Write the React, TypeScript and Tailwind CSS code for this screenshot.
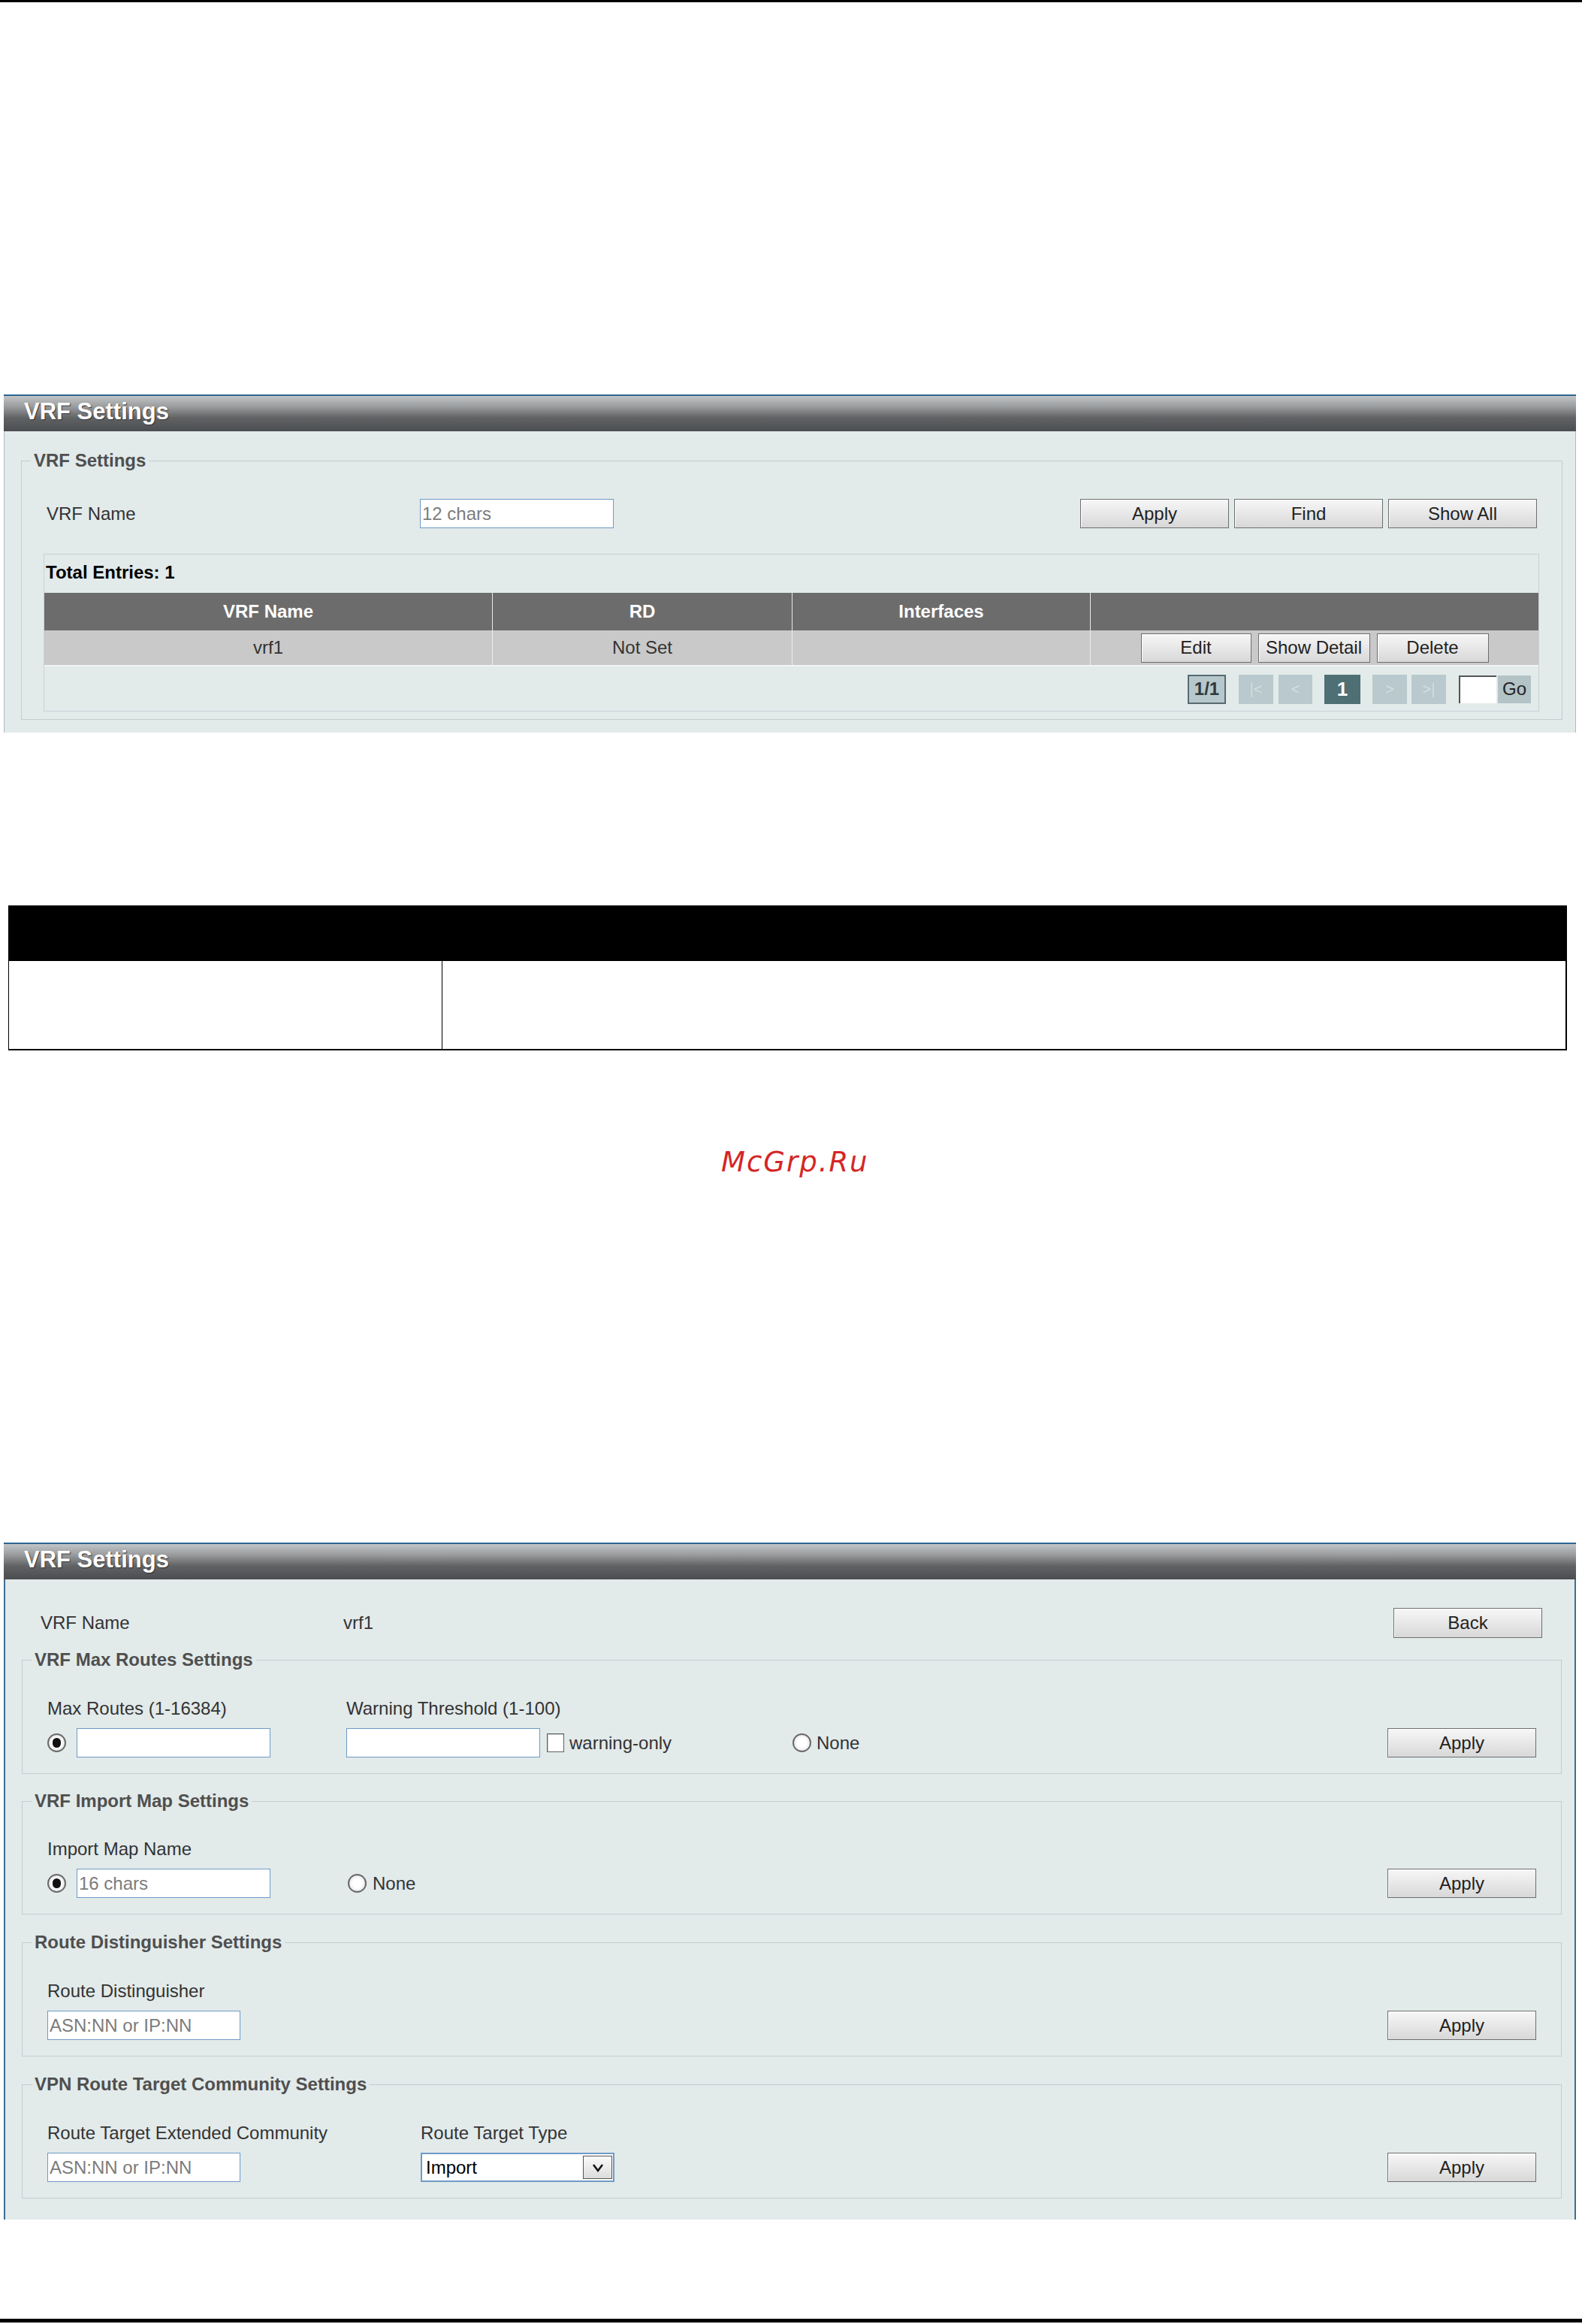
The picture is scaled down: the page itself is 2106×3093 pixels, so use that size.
import React from "react";

function Btn({ children, className }: { children?: React.ReactNode; className: string }) {
  return (
    <div
      className={
        "flex items-center justify-center border border-[#6e6e6e] bg-[linear-gradient(to_bottom,#f7f7f7,#d8d8d8)] text-[#222] text-[24px] leading-none shadow-[inset_1px_1px_0_#ffffff] " +
        className
      }
    >
      {children}
    </div>
  );
}

function TextInput({ placeholder, className }: { placeholder?: string; className: string }) {
  return (
    <div
      className={
        "h-[39px] bg-white border border-[#6f9bc6] flex items-center pl-[2px] text-[#7c7c7c] text-[24px] leading-none " +
        className
      }
    >
      {placeholder}
    </div>
  );
}

function Radio({ checked }: { checked?: boolean }) {
  return (
    <div className="w-[25px] h-[25px] rounded-full border-[2px] border-[#6a6a6a] bg-[radial-gradient(circle,#ffffff_40%,#d8d8d8_100%)] flex items-center justify-center shrink-0">
      {checked ? <div className="w-[11px] h-[13px] rounded-full bg-[#111]" /> : null}
    </div>
  );
}

function Checkbox() {
  return <div className="w-[23px] h-[25px] border border-[#606060] bg-white shadow-[inset_1px_1px_0_#c8c8c8] shrink-0" />;
}

function PanelHeader() {
  return (
    <div className="h-[49px] border-t-2 border-[#2c6592] bg-[linear-gradient(to_bottom,#c2c5c7_0%,#9a9c9e_30%,#606264_62%,#4b4d50_100%)] flex items-center pl-[27px] pb-[7px]">
      <span className="text-white font-bold text-[31px] leading-none [text-shadow:1px_1px_1px_#333]">VRF Settings</span>
    </div>
  );
}

function Fieldset({ legend, className, children }: { legend: string; className: string; children: React.ReactNode }) {
  return (
    <fieldset className={"border border-[#c3cdd0] ml-[22px] mr-[17px] " + className}>
      <legend className="ml-[12px] px-[4px] font-bold text-[#4f4f4f] text-[24px] leading-[28px]">{legend}</legend>
      {children}
    </fieldset>
  );
}

function PageBox({ children, className }: { children?: React.ReactNode; className: string }) {
  return <div className={"flex items-center justify-center leading-none " + className}>{children}</div>;
}

export default function App() {
  return (
    <div className="flex flex-col w-[2106px] min-h-[3093px] bg-white font-['Liberation_Sans',Arial,sans-serif] text-[24px] text-[#333]">
      <div className="h-[3px] bg-black" />

      {/* Panel 1 */}
      <div className="mt-[522px] ml-[5px] w-[2093px] h-[450px] flex flex-col">
        <PanelHeader />
        <div className="flex-1 bg-[#e2eaea] border-x border-[#a9bccb] pt-[25px] flex flex-col">
          <Fieldset legend="VRF Settings" className="pb-[10px]">
            <div className="flex items-center pt-[37px] pl-[33px] pr-[33px]">
              <div className="w-[497px] leading-[28px]">VRF Name</div>
              <TextInput placeholder="12 chars" className="w-[258px]" />
              <div className="ml-auto flex gap-[7px]">
                <Btn className="w-[198px] h-[39px]">Apply</Btn>
                <Btn className="w-[198px] h-[39px]">Find</Btn>
                <Btn className="w-[198px] h-[39px]">Show All</Btn>
              </div>
            </div>

            <div className="mt-[34px] ml-[29px] mr-[30px] border border-[#c9d3d5] flex flex-col">
              <div className="pt-[10px] pl-[2px] font-bold text-black leading-[28px]">Total Entries: 1</div>
              <div className="mt-[13px] grid grid-cols-[597px_399px_397px_1fr] h-[50px] bg-[#6c6c6c] text-white font-bold">
                <div className="flex items-center justify-center border-r border-[#e8e8e8]">VRF Name</div>
                <div className="flex items-center justify-center border-r border-[#e8e8e8]">RD</div>
                <div className="flex items-center justify-center border-r border-[#e8e8e8]">Interfaces</div>
                <div />
              </div>
              <div className="grid grid-cols-[597px_399px_397px_1fr] h-[48px] bg-[#c9c9c9] text-[#333] border-b-2 border-[#f2f4f4]">
                <div className="flex items-center justify-center border-r border-[#eeeeee]">vrf1</div>
                <div className="flex items-center justify-center border-r border-[#eeeeee]">Not Set</div>
                <div className="border-r border-[#eeeeee]" />
                <div className="flex items-center justify-center gap-[9px]">
                  <Btn className="w-[147px] h-[39px]">Edit</Btn>
                  <Btn className="w-[149px] h-[39px]">Show Detail</Btn>
                  <Btn className="w-[149px] h-[39px]">Delete</Btn>
                </div>
              </div>
              <div className="mt-[9px] mb-[8px] h-[42px] flex items-center justify-end pr-[10px]">
                <PageBox className="w-[51px] h-[39px] bg-[#b7c8cc] border-2 border-[#566a70] font-bold text-[#2f3a3d] text-[24px]">1/1</PageBox>
                <PageBox className="ml-[17px] w-[46px] h-[39px] bg-[#b9c9cd] text-[#d3dfe1] text-[20px]">|&lt;</PageBox>
                <PageBox className="ml-[7px] w-[45px] h-[39px] bg-[#b9c9cd] text-[#d3dfe1] text-[20px]">&lt;</PageBox>
                <PageBox className="ml-[16px] w-[48px] h-[39px] bg-[#4e6f73] text-white font-bold text-[26px]">1</PageBox>
                <PageBox className="ml-[16px] w-[46px] h-[39px] bg-[#b9c9cd] text-[#d3dfe1] text-[20px]">&gt;</PageBox>
                <PageBox className="ml-[6px] w-[46px] h-[39px] bg-[#b9c9cd] text-[#d3dfe1] text-[20px]">&gt;|</PageBox>
                <div className="ml-[17px] w-[50px] h-[37px] bg-white border-t-2 border-l-2 border-[#555]" />
                <PageBox className="ml-[2px] w-[44px] h-[37px] bg-[#b3c3c6] text-[#222] text-[24px]">Go</PageBox>
              </div>
            </div>
          </Fieldset>
        </div>
      </div>

      {/* Black parameter table */}
      <div className="mt-[230px] ml-[11px] w-[2075px] flex flex-col border-l border-r-2 border-b-2 border-black">
        <div className="h-[74px] bg-black" />
        <div className="h-[117px] grid grid-cols-[577px_1fr]">
          <div className="border-r border-black" />
          <div />
        </div>
      </div>

      <div className="mt-[126px] h-[44px] pl-[960px] flex items-center font-['DejaVu_Sans',sans-serif] italic text-[37px] tracking-[2px] text-[#d42626] leading-none">
        McGrp.Ru
      </div>

      {/* Panel 2 */}
      <div className="mt-[485px] ml-[5px] w-[2093px] h-[901px] flex flex-col">
        <PanelHeader />
        <div className="flex-1 bg-[#e2eaea] border-x-2 border-[#3f6d92] flex flex-col">
          <div className="mt-[38px] h-[40px] flex items-center pl-[47px] pr-[43px]">
            <div className="w-[403px]">VRF Name</div>
            <div>vrf1</div>
            <Btn className="ml-auto w-[198px] h-[40px]">Back</Btn>
          </div>

          <Fieldset legend="VRF Max Routes Settings" className="mt-[15px] pb-[21px]">
            <div className="pt-[37px] pl-[33px] pr-[33px] flex flex-col">
              <div className="flex leading-[28px]">
                <div className="w-[398px]">Max Routes (1-16384)</div>
                <div>Warning Threshold (1-100)</div>
              </div>
              <div className="mt-[12px] h-[39px] flex items-center">
                <div className="w-[398px] flex items-center">
                  <Radio checked />
                  <TextInput className="ml-[14px] w-[258px]" />
                </div>
                <div className="w-[594px] flex items-center">
                  <TextInput className="w-[258px]" />
                  <div className="ml-[9px]">
                    <Checkbox />
                  </div>
                  <div className="ml-[7px]">warning-only</div>
                </div>
                <Radio />
                <div className="ml-[7px]">None</div>
                <Btn className="ml-auto w-[198px] h-[39px]">Apply</Btn>
              </div>
            </div>
          </Fieldset>

          <Fieldset legend="VRF Import Map Settings" className="mt-[22px] pb-[21px]">
            <div className="pt-[36px] pl-[33px] pr-[33px] flex flex-col">
              <div className="leading-[28px]">Import Map Name</div>
              <div className="mt-[12px] h-[39px] flex items-center">
                <div className="w-[400px] flex items-center">
                  <Radio checked />
                  <TextInput placeholder="16 chars" className="ml-[14px] w-[258px]" />
                </div>
                <Radio />
                <div className="ml-[8px]">None</div>
                <Btn className="ml-auto w-[198px] h-[39px]">Apply</Btn>
              </div>
            </div>
          </Fieldset>

          <Fieldset legend="Route Distinguisher Settings" className="mt-[23px] pb-[21px]">
            <div className="pt-[37px] pl-[33px] pr-[33px] flex flex-col">
              <div className="leading-[28px]">Route Distinguisher</div>
              <div className="mt-[12px] h-[39px] flex items-center">
                <TextInput placeholder="ASN:NN or IP:NN" className="w-[257px]" />
                <Btn className="ml-auto w-[198px] h-[39px]">Apply</Btn>
              </div>
            </div>
          </Fieldset>

          <Fieldset legend="VPN Route Target Community Settings" className="mt-[23px] pb-[21px]">
            <div className="pt-[37px] pl-[33px] pr-[33px] flex flex-col">
              <div className="flex leading-[28px]">
                <div className="w-[497px]">Route Target Extended Community</div>
                <div>Route Target Type</div>
              </div>
              <div className="mt-[12px] h-[39px] flex items-center">
                <div className="w-[497px]">
                  <TextInput placeholder="ASN:NN or IP:NN" className="w-[257px]" />
                </div>
                <div className="w-[258px] h-[39px] bg-white border-2 border-[#6f9bc6] flex items-center pl-[5px] pr-[1px] text-black">
                  <span>Import</span>
                  <div className="ml-auto w-[39px] h-[31px] border border-[#555] bg-[linear-gradient(to_bottom,#fafafa,#dcdcdc)] flex items-center justify-center">
                    <svg width="16" height="12" viewBox="0 0 16 12">
                      <path d="M2 2 L8 10 L14 2" fill="none" stroke="#111" strokeWidth="2.5" />
                    </svg>
                  </div>
                </div>
                <Btn className="ml-auto w-[198px] h-[39px]">Apply</Btn>
              </div>
            </div>
          </Fieldset>
        </div>
      </div>

      <div className="mt-[132px] h-[5px] bg-black" />
    </div>
  );
}
